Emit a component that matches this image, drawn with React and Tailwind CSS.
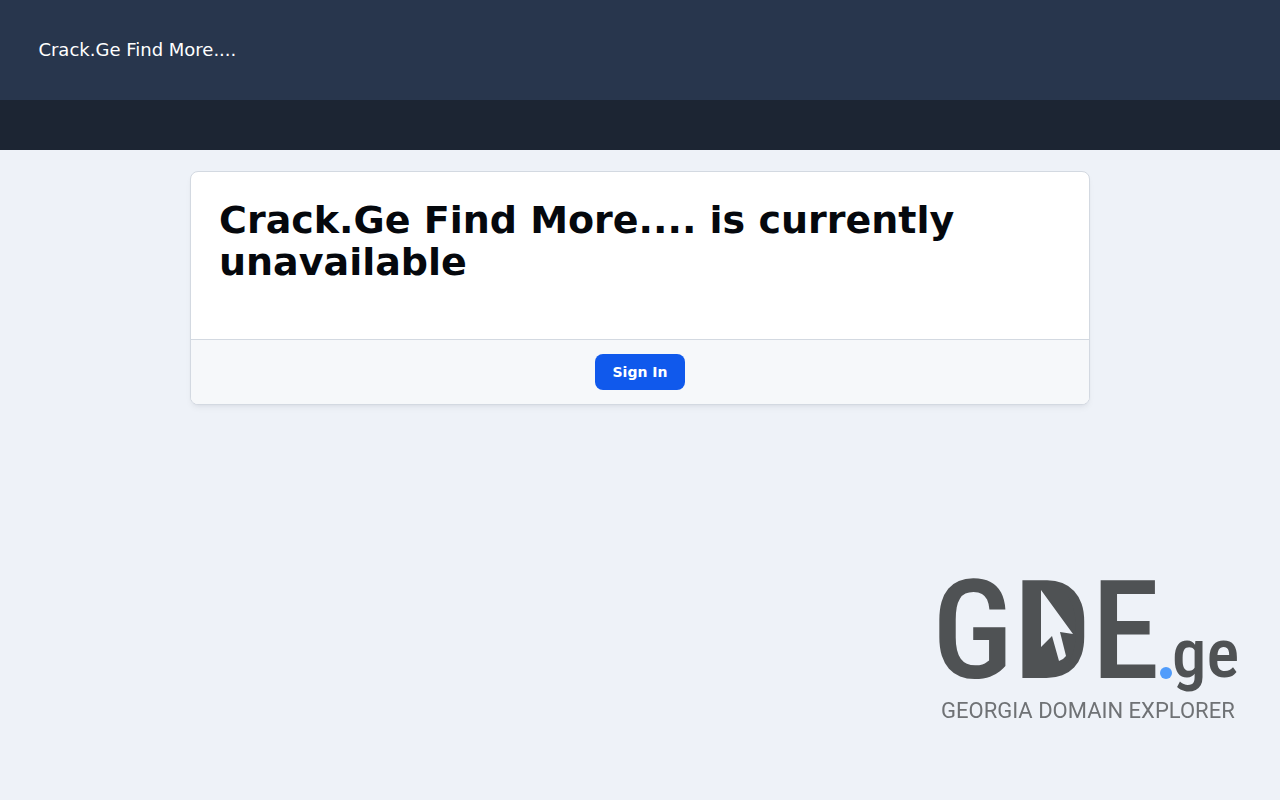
const SITE_NAME = "Crack.Ge Find More....";

function Logo() {
  return (
    <svg
      width="320"
      height="180"
      viewBox="0 0 320 180"
      role="img"
      aria-label="GDE.ge Georgia Domain Explorer"
      className="overflow-visible font-['Roboto_Condensed','Liberation_Sans_Narrow',sans-serif]"
    >
      <text x="12" y="138" fontSize="138" fontWeight="500" fill="#4f5254">
        GDE
      </text>
      {/* solid middle letter with the pointer on top */}
      <path
        d="M106 46h28q22 8 22 44t-22 44h-28z"
        fill="#4f5254"
      />
      <path
        d="M121 50 153 94 140 92 146 116Q143 120 139 121L132 96 121 107Z"
        fill="#eef2f8"
      />
      <circle cx="246" cy="133" r="6" fill="#509cfb" />
      <text x="252" y="137" fontSize="69" fontWeight="500" fill="#4f5254">
        ge
      </text>
      <text
        x="21"
        y="178"
        fontSize="22"
        fill="#6f7275"
        className="font-['Roboto',sans-serif]"
      >
        GEORGIA DOMAIN EXPLORER
      </text>
    </svg>
  );
}

function App() {
  return (
    <div className="min-h-screen bg-[#eef2f8] font-['DejaVu_Sans',sans-serif]">
      <header>
        <div className="flex h-[100px] items-center bg-[#28364d] px-[3%]">
          <a href="#" className="text-lg text-white">
            {SITE_NAME}
          </a>
        </div>
        <div className="h-[50px] bg-[#1c2533]" />
      </header>

      <main className="px-5 pt-[21px]">
        <div className="mx-auto max-w-[900px] overflow-hidden rounded-lg border border-[#d3d9e1] bg-white shadow-md shadow-slate-900/5">
          <div className="px-7 pt-[27px] pb-14">
            <h1 className="text-[38px] leading-[42px] font-bold text-[#05080d]">
              {SITE_NAME} is currently unavailable
            </h1>
          </div>
          <div className="flex justify-center border-t border-[#d3d9e1] bg-[#f6f8fa] py-3.5">
            <button
              type="button"
              className="h-9 w-[90px] rounded-lg bg-[#1059ec] text-sm font-bold text-white"
            >
              Sign In
            </button>
          </div>
        </div>
      </main>

      <div className="fixed right-10 bottom-20">
        <Logo />
      </div>
    </div>
  );
}

export default App;
